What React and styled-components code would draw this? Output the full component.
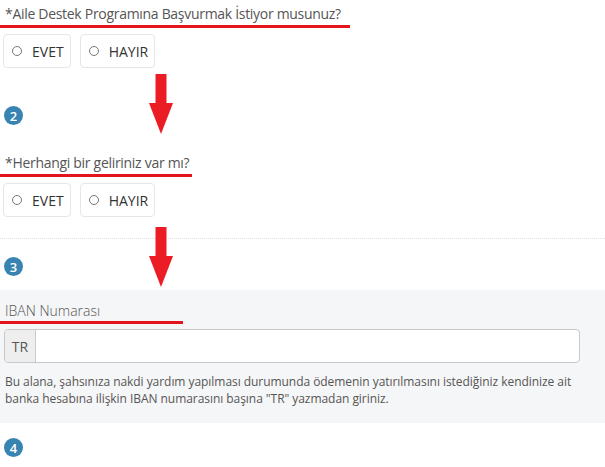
import styled, { createGlobalStyle } from "styled-components";

const GlobalStyle = createGlobalStyle`
  html, body {
    margin: 0;
    padding: 0;
    background: #fff;
  }
  body {
    font-family: "Open Sans", "Noto Sans", sans-serif;
    color: #555;
  }
`;

const Page = styled.div`
  width: 605px;
  height: 467px;
  overflow: hidden;
`;

const Question = styled.section`
  display: flex;
  flex-direction: column;
`;

const Title = styled.div`
  width: ${(props) => props.$width}px;
  padding: 4px 0 1px 5px;
  box-sizing: border-box;
  font-size: 14px;
  letter-spacing: -0.3px;
  line-height: 20px;
  color: #555;
  border-bottom: 3px solid #e3141c;
  white-space: nowrap;
`;

const Options = styled.div`
  display: flex;
  gap: 9px;
  margin: 6px 0 0 3px;
`;

const Option = styled.label`
  display: flex;
  align-items: center;
  gap: 10px;
  height: 34px;
  box-sizing: border-box;
  padding: 0 6px 0 8px;
  border: 1px solid #e6e6e6;
  border-radius: 4px;
  font-size: 14px;
  color: #333;
  background: #fff;
`;

const Radio = styled.span`
  width: 10px;
  height: 10px;
  box-sizing: border-box;
  border: 1px solid #777;
  border-radius: 50%;
  background: #fff;
`;

const Step = styled.div`
  position: relative;
  padding: ${(props) => props.$pad};
  margin-top: ${(props) => props.$mt || 0}px;
  border-top: ${(props) => (props.$divided ? "1px dotted #e2e2e2" : "none")};
`;

const Badge = styled.div`
  width: 19px;
  height: 19px;
  border-radius: 50%;
  background: #3783b1;
  color: #fff;
  font-size: 13px;
  font-weight: 600;
  display: flex;
  align-items: center;
  justify-content: center;
`;

const ArrowWrap = styled.div`
  position: absolute;
  left: 149px;
  top: ${(props) => props.$top}px;
  width: 24px;
  height: 60px;
`;

const Panel = styled.section`
  background: #f5f6f7;
  padding: 12px 25px 16px 0;
`;

const FieldLabel = styled(Title)`
  font-size: 14px;
  letter-spacing: 0;
  line-height: 18px;
  padding: 0 0 1px 5px;
  font-weight: 300;
  color: #555;
`;

const InputGroup = styled.div`
  display: flex;
  margin: 5px 0 0 4px;
  height: 34px;
  box-sizing: border-box;
  border: 1px solid #c8c8c8;
  border-radius: 4px;
  overflow: hidden;
  background: #fff;
`;

const Addon = styled.span`
  width: 30px;
  display: flex;
  align-items: center;
  justify-content: center;
  background: #eee;
  border-right: 1px solid #ccc;
  font-size: 14px;
  color: #555;
`;

const Field = styled.input`
  flex: 1;
  border: none;
  outline: none;
  background: transparent;
`;

const Help = styled.p`
  margin: 10px 0 0 5px;
  font-size: 12px;
  line-height: 17px;
  letter-spacing: -0.05px;
  color: #555;
`;

function Arrow({ top }) {
  return (
    <ArrowWrap $top={top}>
      <svg width="24" height="60" viewBox="0 0 24 60">
        <rect x="6.5" y="0" width="11" height="30" fill="#ec1c24" />
        <polygon points="0,29 24,29 12,60" fill="#ec1c24" />
      </svg>
    </ArrowWrap>
  );
}

function YesNo() {
  return (
    <Options>
      <Option>
        <Radio />
        EVET
      </Option>
      <Option>
        <Radio />
        HAYIR
      </Option>
    </Options>
  );
}

export default function App() {
  return (
    <Page>
      <GlobalStyle />
      <Question>
        <Title $width={350}>*Aile Destek Programına Başvurmak İstiyor musunuz?</Title>
        <YesNo />
      </Question>
      <Step $pad="38px 0 24px 4px">
        <Badge>2</Badge>
        <Arrow top={6} />
      </Step>
      <Question>
        <Title $width={192}>*Herhangi bir geliriniz var mı?</Title>
        <YesNo />
      </Question>
      <Step $divided $mt={21} $pad="18px 0 14px 4px">
        <Badge>3</Badge>
        <Arrow top={-12} />
      </Step>
      <Panel>
        <FieldLabel $width={183}>IBAN Numarası</FieldLabel>
        <InputGroup>
          <Addon>TR</Addon>
          <Field type="text" />
        </InputGroup>
        <Help>
          Bu alana, şahsınıza nakdi yardım yapılması durumunda ödemenin yatırılmasını istediğiniz kendinize ait
          banka hesabına ilişkin IBAN numarasını başına "TR" yazmadan giriniz.
        </Help>
      </Panel>
      <Step $pad="15px 0 0 4px">
        <Badge>4</Badge>
      </Step>
    </Page>
  );
}
